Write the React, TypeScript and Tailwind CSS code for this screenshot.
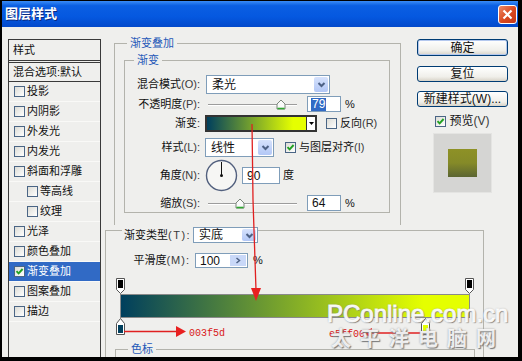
import React from "react";

const FONT = "font-['Liberation_Sans','Noto_Sans_CJK_SC',sans-serif]";
const GRAD = "bg-[linear-gradient(to_right,#003f5d_0%,#e5ff00_87%)]";

function Check({ checked = false }: { checked?: boolean }) {
  return (
    <span className="inline-flex h-[11px] w-[11px] shrink-0 items-center justify-center border border-[#4a6585] bg-[linear-gradient(135deg,#dcdcd6,#ffffff)]">
      {checked && (
        <svg width="9" height="9" viewBox="0 0 9 9">
          <path d="M1.5 4.2 L3.6 6.4 L7.6 2" fill="none" stroke="#21a121" strokeWidth="1.9" />
        </svg>
      )}
    </span>
  );
}

function Chevron() {
  return (
    <svg width="11" height="11" viewBox="0 0 11 11">
      <path d="M2.5 4 L5.5 7 L8.5 4" fill="none" stroke="#4d6185" strokeWidth="2" />
    </svg>
  );
}

function Select({ value, w, h }: { value: string; w: string; h: string }) {
  return (
    <div className={`flex items-stretch border border-[#7f9db9] bg-white ${w} ${h}`}>
      <span className="flex flex-1 items-center pl-[5px] text-[12px]">{value}</span>
      <span className="m-[1px] flex w-[14px] items-center justify-center rounded-[2px] bg-[linear-gradient(#d6e2fc,#b2c7f6)]">
        <Chevron />
      </span>
    </div>
  );
}

function Thumb() {
  return (
    <svg width="10" height="11" viewBox="0 0 10 11">
      <path d="M1 5 L5 1 L9 5 V10 H1 Z" fill="#fafafa" stroke="#7b857b" />
      <path d="M1.5 9.5 H8.5" stroke="#2fa82f" strokeWidth="1.6" />
    </svg>
  );
}

function Slider({ pos }: { pos: string }) {
  return (
    <div className="relative h-[16px] w-[95px]">
      <div className="absolute left-[3px] right-[3px] top-[8px] h-[2px] border-t border-[#9c9c9c] bg-white" />
      <div className={`absolute top-[3px] ${pos}`}>
        <Thumb />
      </div>
    </div>
  );
}

function Field({ children, w, h, pl = "pl-[4px]" }: { children: React.ReactNode; w: string; h: string; pl?: string }) {
  return <div className={`flex items-center border border-[#7f9db9] bg-white text-[12px] ${w} ${h} ${pl}`}>{children}</div>;
}

function Row({ label, hint, cls, children }: { label: string; hint: string; cls: string; children: React.ReactNode }) {
  return (
    <div className={`flex items-center ${cls}`}>
      <span className="w-[75px] shrink-0 whitespace-nowrap text-right">
        {label}
        <span className="text-[#3a3a3a]">{hint}</span>
      </span>
      <div className="ml-[5px] flex items-center">{children}</div>
    </div>
  );
}

const items: [string, boolean, boolean][] = [
  ["投影", false, false],
  ["内阴影", false, false],
  ["外发光", false, false],
  ["内发光", false, false],
  ["斜面和浮雕", false, false],
  ["等高线", true, false],
  ["纹理", true, false],
  ["光泽", false, false],
  ["颜色叠加", false, false],
  ["渐变叠加", false, true],
  ["图案叠加", false, false],
  ["描边", false, false],
];

function LeftList() {
  return (
    <div className="ml-[6px] mt-[12px] flex w-[93px] flex-col border-x border-[#3a3a3a]">
      <div className="flex h-[22px] items-center border-y border-[#3a3a3a] pl-[4px]">样式</div>
      <div className="mt-[1px] flex h-[20px] items-center border-y border-[#3a3a3a] pl-[4px]">混合选项:默认</div>
      {items.map(([name, indent, sel]) => (
        <div
          key={name}
          className={`flex h-[20px] items-center gap-[2px] border-b border-[#f9f9f7] ${indent ? "pl-[18px]" : "pl-[5px]"} ${sel ? "bg-[#316ac5] text-white" : ""}`}
        >
          <Check checked={sel} />
          <span>{name}</span>
        </div>
      ))}
    </div>
  );
}

function EffectPanel() {
  return (
    <fieldset className="ml-[9px] mt-[9px] h-[189px] w-[287px] min-w-0 border border-b-0 border-[#b3b3ac]">
      <legend className="ml-[12px] px-[3px] text-[11px] leading-[14px] text-[#2458b8]">渐变叠加</legend>
      <fieldset className="ml-[9px] mt-[3px] w-[266px] min-w-0 border border-[#b3b3ac] pb-[1px]">
        <legend className="ml-[9px] px-[3px] text-[11px] leading-[14px] text-[#2458b8]">渐变</legend>

        <Row label="混合模式" hint="(O):" cls="mt-[8px] h-[19px]">
          <div className="ml-[1px]">
            <Select value="柔光" w="w-[124px]" h="h-[19px]" />
          </div>
        </Row>

        <Row label="不透明度" hint="(P):" cls="mt-[2px] h-[16px]">
          <Slider pos="left-[71px]" />
          <div className="ml-[7px]">
            <Field w="w-[34px]" h="h-[16px]" pl="pl-[3px]">
              <span className="bg-[#316ac5] px-[1px] leading-[13px] text-white">79</span>
            </Field>
          </div>
          <span className="ml-[4px]">%</span>
        </Row>

        <Row label="渐变" hint=":" cls="mt-[3px] h-[17px]">
          <div className="flex h-[17px] w-[112px] border-2 border-[#333]">
            <div className={`flex-1 ${GRAD}`} />
            <div className="flex w-[9px] items-center justify-center border-l border-[#333] bg-white">
              <svg width="5" height="3" viewBox="0 0 5 3">
                <path d="M0 0 H5 L2.5 3 Z" fill="#000" />
              </svg>
            </div>
          </div>
          <div className="ml-[9px] flex items-center gap-[3px]">
            <Check />
            <span>
              反向<span className="text-[#3a3a3a]">(R)</span>
            </span>
          </div>
        </Row>

        <Row label="样式" hint="(L):" cls="mt-[6px] h-[19px]">
          <Select value="线性" w="w-[69px]" h="h-[19px]" />
          <div className="ml-[11px] flex items-center gap-[3px]">
            <Check checked />
            <span>
              与图层对齐<span className="text-[#3a3a3a]">(I)</span>
            </span>
          </div>
        </Row>

        <Row label="角度" hint="(N):" cls="mt-[2px] h-[33px]">
          <svg width="33" height="33" viewBox="0 0 33 33">
            <circle cx="16.5" cy="16.5" r="15" fill="#f6f6f4" stroke="#52607e" strokeWidth="1.4" />
            <path d="M16.5 16.5 V3" stroke="#111" strokeWidth="1" />
            <circle cx="16.5" cy="16.5" r="1.5" fill="#111" />
          </svg>
          <div className="ml-[4px]">
            <Field w="w-[38px]" h="h-[17px]">
              90
            </Field>
          </div>
          <span className="ml-[3px]">度</span>
        </Row>

        <Row label="缩放" hint="(S):" cls="mt-[3px] h-[16px]">
          <Slider pos="left-[30px]" />
          <div className="ml-[7px]">
            <Field w="w-[34px]" h="h-[16px]">
              64
            </Field>
          </div>
          <span className="ml-[4px]">%</span>
        </Row>
      </fieldset>
    </fieldset>
  );
}

function Btn({ children, cls }: { children: React.ReactNode; cls: string }) {
  return (
    <div
      className={`flex w-[91px] items-center justify-center rounded-[3px] border border-[#003c74] bg-[linear-gradient(#ffffff,#f0efea_70%,#d8d3c8)] text-[12px] ${cls}`}
    >
      {children}
    </div>
  );
}

function Buttons() {
  return (
    <div className="ml-[16px] flex w-[91px] flex-col items-center">
      <Btn cls="mt-[12px] h-[17px] shadow-[inset_0_0_0_1px_#b4c8ee]">确定</Btn>
      <Btn cls="mt-[10px] h-[16px]">复位</Btn>
      <Btn cls="mt-[9px] h-[16px]">新建样式(W)...</Btn>
      <div className="mt-[7px] flex h-[14px] items-center gap-[3px] text-[12px]">
        <Check checked />
        <span>
          预览<span className="text-[#3a3a3a]">(V)</span>
        </span>
      </div>
      <div className="mt-[5px] flex h-[60px] w-[59px] items-center justify-center border border-[#e4e4e2] bg-[#d5d5d3]">
        <div className="h-[28px] w-[29px] bg-[linear-gradient(#8e9126,#858a28_50%,#5b6532)]" />
      </div>
    </div>
  );
}

function StopTop() {
  return (
    <svg width="9" height="16" viewBox="0 0 9 16">
      <path d="M0.5 0.5 H8.5 V11.5 L4.5 15.5 L0.5 11.5 Z" fill="#fff" stroke="#555" />
      <rect x="2" y="2" width="5" height="8" fill="#000" />
    </svg>
  );
}

function StopBottom({ color }: { color: string }) {
  return (
    <svg width="9" height="17" viewBox="0 0 9 17">
      <path d="M0.5 5.5 L4.5 0.5 L8.5 5.5 V16.5 H0.5 Z" fill="#fff" stroke="#555" />
      <rect x="2" y="7" width="5" height="8" fill={color} />
    </svg>
  );
}

function GradientEditor() {
  return (
    <div className="mt-[5px] flex w-[379px] flex-1 flex-col border border-b-0 border-[#b3b3ac]">
      <div className="-mt-[4px] ml-[16px] flex h-[16px] w-fit items-center gap-[2px] bg-[#efefed] pl-[2px]">
        <span className="whitespace-nowrap">
          渐变类型<span className="tracking-[1.5px] text-[#3a3a3a]">(T):</span>
        </span>
        <Select value="实底" w="w-[65px]" h="h-[16px]" />
      </div>

      <div className="mt-[10px] flex h-[15px] items-center">
        <span className="w-[84px] whitespace-nowrap text-right">
          平滑度<span className="tracking-[1px] text-[#3a3a3a]">(M):</span>
        </span>
        <div className="ml-[5px] flex h-[15px] w-[53px] items-stretch border border-[#7f9db9] bg-white text-[12px]">
          <span className="flex flex-1 items-center pl-[4px]">100</span>
          <span className="m-[1px] flex w-[16px] items-center justify-center bg-[#c9d8f8]">
            <svg width="6" height="7" viewBox="0 0 6 7">
              <path d="M1.5 1 L4.5 3.5 L1.5 6" fill="none" stroke="#4d6185" strokeWidth="1.5" />
            </svg>
          </span>
        </div>
        <span className="ml-[5px]">%</span>
      </div>

      <div className="relative ml-[14px] mt-[10px] w-[350px]">
        <div className="relative h-[16px]">
          <div className="absolute left-[-4px] top-0">
            <StopTop />
          </div>
          <div className="absolute right-[-4px] top-0">
            <StopTop />
          </div>
        </div>
        <div className={`h-[24px] border border-[#8a8a8a] ${GRAD}`} />
        <div className="relative h-[17px]">
          <div className="absolute left-[-4px] top-0">
            <StopBottom color="#003f5d" />
          </div>
          <div className="absolute left-[301px] top-0">
            <StopBottom color="#e5ff00" />
          </div>
        </div>
      </div>

      <fieldset className="ml-[9px] mr-[8px] mt-[7px] h-[30px] min-w-0 border border-[#b3b3ac]">
        <legend className="ml-[12px] px-[3px] text-[11px] leading-[14px] text-[#2458b8]">色标</legend>
      </fieldset>
    </div>
  );
}

function TitleBar() {
  return (
    <div className="flex h-[26px] items-center justify-between bg-[linear-gradient(#3a8cf6,#0b5fe2_18%,#0558e0_60%,#0349cb)] pl-[3px] pr-[1px]">
      <span className="text-[13px] font-bold text-white [text-shadow:1px_1px_0_#0a2a80]">图层样式</span>
      <div className="flex h-[19px] w-[19px] items-center justify-center rounded-[3px] border border-white bg-[linear-gradient(135deg,#ec8a66,#d9481f_55%,#c4381a)]">
        <svg width="11" height="11" viewBox="0 0 11 11">
          <path d="M1.5 1.5 L9.5 9.5 M9.5 1.5 L1.5 9.5" stroke="#fff" strokeWidth="2.2" />
        </svg>
      </div>
    </div>
  );
}

function Annotations() {
  return (
    <svg className="pointer-events-none absolute left-0 top-0" width="522" height="361" viewBox="0 0 522 361">
      <path d="M252 124 L253 200 L256 290" fill="none" stroke="#e02020" strokeWidth="1.3" />
      <path d="M251 288 L261 288 L256 301 Z" fill="#e82020" />
      <path d="M124 331.5 H178" stroke="#e02020" strokeWidth="1.3" />
      <path d="M176 326 L176 337 L186 331.5 Z" fill="#e82020" />
      <text x="189" y="335.5" fontFamily="Liberation Mono, monospace" fontSize="10" fill="#d81818">
        003f5d
      </text>
      <path d="M370 333 H424" stroke="#e02020" strokeWidth="1.3" />
      <path d="M372 328 L372 338 L362 333 Z" fill="#e82020" />
      <text x="329" y="337" fontFamily="Liberation Mono, monospace" fontSize="10" fill="#d81818">
        e5ff00
      </text>
    </svg>
  );
}

function Watermark() {
  return (
    <>
      <div className="pointer-events-none absolute left-[327px] top-[300px] whitespace-nowrap font-['Liberation_Sans',sans-serif] text-[24px] leading-[28px] text-white/90 [-webkit-text-stroke:1px_#ffffffcc] [text-shadow:1px_1px_1px_#7a7a7a,0_0_2px_#8a8a8a]">
        PConline.com.cn
      </div>
      <div className="pointer-events-none absolute left-[331px] top-[327px] whitespace-nowrap font-['Noto_Sans_CJK_SC',sans-serif] text-[20px] font-bold leading-[22px] tracking-[9px] text-white/85 [text-shadow:1px_1px_1px_#7a7a7a,0_0_2px_#999]">
        太平洋电脑网
      </div>
    </>
  );
}

export default function App() {
  return (
    <div className={`relative h-[361px] w-[522px] overflow-hidden bg-black pb-[4px] pl-[2px] pr-[4px] pt-[1px] text-[11px] text-[#111] ${FONT}`}>
      <div className="flex h-full flex-col">
        <TitleBar />
        <div className="flex flex-1 overflow-hidden bg-[#efefed]">
          <LeftList />
          <div className="ml-[4px] flex flex-1 flex-col">
            <div className="flex h-[198px] shrink-0">
              <EffectPanel />
              <Buttons />
            </div>
            <GradientEditor />
          </div>
        </div>
      </div>
      <Annotations />
      <Watermark />
    </div>
  );
}
